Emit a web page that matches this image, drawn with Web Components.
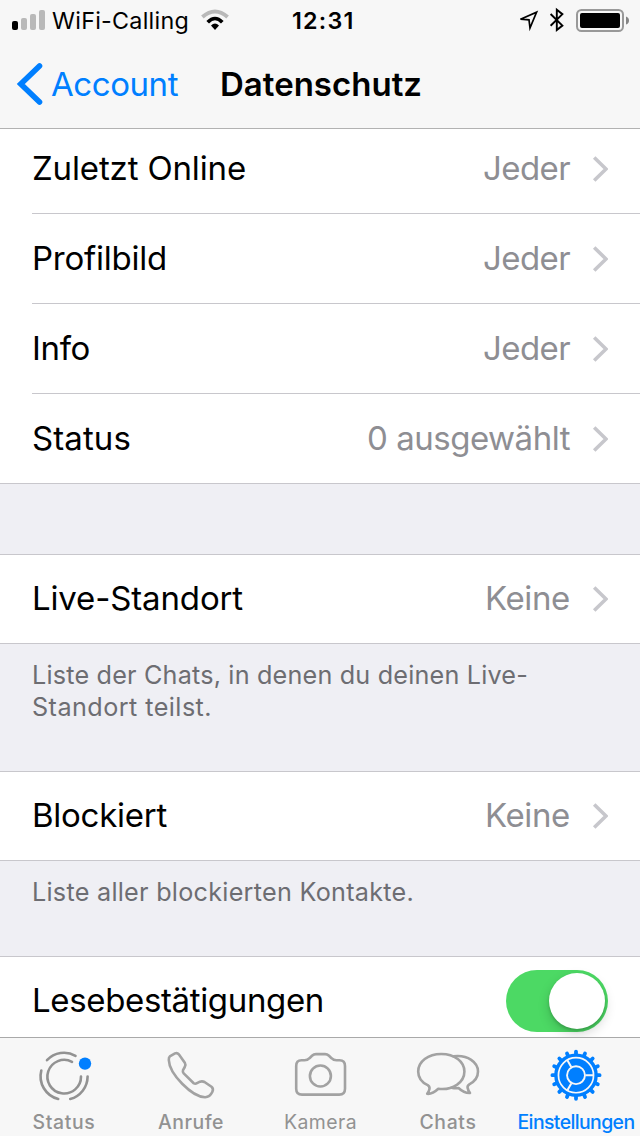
<!DOCTYPE html>
<html lang="de">
<head>
<meta charset="utf-8">
<title>Datenschutz</title>
<style>
html,body{margin:0;height:100%}
body{overflow:hidden;font-family:Inter,"Liberation Sans",sans-serif;background:#efeff4}
</style>
</head>
<body>
<privacy-screen></privacy-screen>
<script>
const define = (name, html, setup) => customElements.define(name, class extends HTMLElement {
  constructor() {
    super();
    const t = document.createElement('template');
    t.innerHTML = html;
    this.attachShadow({mode: 'open'}).append(t.content.cloneNode(true));
  }
  connectedCallback() { if (setup) setup(this, this.shadowRoot); }
});

// Text whose tracking is adjusted so that it fills the width given in "w".
define('fit-text', `<style>
:host{display:block;white-space:nowrap;flex:none}
</style><span><slot></slot></span>`, (el, root) => {
  const w = +el.getAttribute('w');
  const natural = root.querySelector('span').getBoundingClientRect().width;
  const n = el.textContent.length;
  el.style.letterSpacing = ((w - natural) / n) + 'px';
  el.style.width = w + 'px';
});

define('status-bar', `<style>
:host{display:grid;grid-template-columns:52px 147px 93px 224px 1fr;height:40px;align-items:center;color:#000;font-size:23.3px}
svg{display:block}
fit-text{line-height:38px;padding-top:2px}
.time{font-weight:600}
</style>
<svg width="51" height="40"><rect x="12" y="21" width="6" height="9" rx="2"/><g fill="#b9b9b9"><rect x="21" y="18" width="6" height="12" rx="2"/><rect x="30" y="14" width="6" height="16" rx="2"/><rect x="39" y="10" width="6" height="20" rx="2"/></g></svg>
<fit-text w="137">WiFi-Calling</fit-text>
<svg width="92" height="40" viewBox="199 0 92 40" fill="none"><path d="M202.4 17Q215 6 227.6 17" stroke="#b9b9b9" stroke-width="3.9"/><path d="M207.7 22.2Q215 14.8 222.3 22.2" stroke="#000" stroke-width="3.7"/><path d="M211 25.4Q215 21.6 219 25.4L215 30Z" fill="#000"/></svg>
<fit-text class="time" w="62.5">12:31</fit-text>
<svg width="124" height="40" viewBox="516 0 124 40"><path d="M520.5 19.2L536.6 12.2L530 28L529 19.8Z" fill="none" stroke="#000" stroke-width="1.7"/><path d="M550.6 14L562.4 25.6L556.8 30V9.8L562.4 14.2L550.6 25.8" fill="none" stroke="#000" stroke-width="1.9"/><rect x="577" y="10" width="46" height="21" rx="4.5" fill="none" stroke="#999" stroke-width="2"/><rect x="580" y="13" width="40" height="15" rx="2"/><path d="M626 16.5Q629 17.5 629 20.5T626 24.5Z" fill="#858585"/></svg>`);

define('nav-bar', `<style>
:host{display:block;height:128px;background:#f7f7f7;border-bottom:1px solid #b2b2b2;position:relative;z-index:1}
.bar{display:grid;grid-template-columns:51px 169px 1fr;height:88px;font-size:33px}
svg{display:block}
fit-text{line-height:88px}
.back{color:#007fff}
.title{font-weight:600}
</style>
<status-bar></status-bar>
<div class="bar">
<svg width="51" height="88" viewBox="0 40 51 88"><path d="M39.5 66L20.8 84L39.5 102" fill="none" stroke="#007fff" stroke-width="5.6" stroke-linecap="round"/></svg>
<fit-text class="back"></fit-text>
<fit-text class="title"></fit-text>
</div>`, (el, root) => {
  const put = (cls, text, w) => {
    const old = root.querySelector(cls), t = document.createElement('fit-text');
    t.className = cls.slice(1);
    t.setAttribute('w', w);
    t.textContent = text;
    old.replaceWith(t);
  };
  put('.back', el.getAttribute('back'), 127);
  put('.title', el.getAttribute('heading'), 202);
});

define('list-row', `<style>
:host{display:flex;box-sizing:border-box;height:90px;padding:0 32px;background:#fff;align-items:center;font-size:33px;line-height:87px;
background-image:linear-gradient(#c8c7cc,#c8c7cc);background-repeat:no-repeat;background-size:100% 1px;background-position:var(--inset,0) 89px}
:host([inset]){--inset:32px}
:host([first]){border-top:1px solid #c8c7cc;background-position:0 88px;padding-bottom:2px}
::slotted(fit-text){padding-bottom:2px}
:host([first]) ::slotted(fit-text){padding-bottom:0}
::slotted([slot=value]){margin-left:auto;color:#8e8e93}
svg{display:block;margin-left:22px}
</style>
<slot></slot><slot name="value"></slot><svg width="16" height="28"><path d="M2.2 2.5L14 14L2.2 25.5" fill="none" stroke="#c7c7cc" stroke-width="3.6"/></svg>`);

define('list-note', `<style>
:host{display:block;box-sizing:border-box;padding:15px 32px 0;font-size:25.2px;line-height:32px;color:#6d6d72}
</style><slot></slot>`);

define('toggle-row', `<style>
:host{display:flex;box-sizing:border-box;height:90px;border-top:1px solid #c8c7cc;padding:0 32px 2px;background:#fff;align-items:center;justify-content:space-between;font-size:33px;line-height:87px}
.track{width:102px;height:62px;border-radius:31px;background:#4cd964;display:flex;align-items:center;justify-content:flex-end;padding-right:3px;box-sizing:border-box}
.knob{width:56px;height:56px;border-radius:50%;background:#fff;box-shadow:0 5px 12px rgba(0,0,0,.17),0 2px 3px rgba(0,0,0,.16)}
</style><slot></slot><div class="track"><div class="knob"></div></div>`);

define('tab-item', `<style>
:host{display:flex;flex-direction:column;align-items:center;color:#929292;font-size:19.4px;line-height:24px;font-weight:500}
:host([active]){color:#007fff}
::slotted(svg){display:block;width:128px;height:72px;fill:none;stroke:currentColor;stroke-width:2.6;stroke-linecap:round;stroke-linejoin:round}
</style><slot name="icon"></slot><slot></slot>`);

define('tab-bar', `<style>
:host{display:grid;grid-template-columns:repeat(5,128px);height:98px;background:#f7f7f7;border-top:1px solid #a9a9a9;position:relative;z-index:1}
</style>
<tab-item><svg slot="icon" viewBox="0 1038 128 72"><path d="M47 1060.2A23.4 23.4 0 0 1 75.5 1055.8M41.3 1070.5A23.4 23.4 0 0 0 58.2 1099M70.2 1099A23.4 23.4 0 0 0 87.6 1076.5M72 1061.8A16.8 16.8 0 1 0 81 1076.5"/><circle cx="85" cy="1063.6" r="6.2" fill="#007fff" stroke="none"/></svg><fit-text w="63">Status</fit-text></tab-item>
<tab-item><svg slot="icon" viewBox="128 1038 128 72"><path style="stroke:#a2a2a2" d="M169.8 1056.4L175 1053.4Q177.2 1052.4 178.8 1054.3L184.8 1062.7Q186 1064.7 184.8 1067L183 1070.2Q182.4 1071.8 183.7 1073.4L193.7 1083.2Q195.2 1084.3 197 1083.2L200 1081.7Q202.3 1080.9 204.5 1082L211.5 1086.8Q213.8 1088.7 212.4 1091.8Q209.8 1097.3 205 1097.2C192 1097 169.3 1074 168.8 1060Q168.7 1057.3 169.8 1056.4Z"/></svg><fit-text w="66" style="margin-right:2px">Anrufe</fit-text></tab-item>
<tab-item><svg slot="icon" viewBox="256 1038 128 72"><g style="stroke:#a2a2a2"><path d="M301.5 1060.3H304.5Q307.5 1060.3 309.5 1058.2L312 1055.8Q313.8 1054.1 316 1054.1H325Q327.2 1054.1 329 1055.8L331.5 1058.2Q333.5 1060.3 336.5 1060.3H339.5Q345 1060.3 345 1066V1088.7Q345 1094.6 339.2 1094.6H302Q296.2 1094.6 296.2 1088.7V1066Q296.2 1060.3 301.5 1060.3Z"/><circle cx="320.4" cy="1076" r="10.5"/></g></svg><fit-text w="73" style="font-weight:400;margin-left:1px">Kamera</fit-text></tab-item>
<tab-item><svg slot="icon" viewBox="384 1038 128 72"><g style="stroke:#a2a2a2"><path d="M441.3 1054C428 1054 418.2 1061.5 418.2 1071.5C418.2 1077.5 421.8 1082.4 427.7 1085.2C430.7 1087 429.6 1090.5 427.2 1093.8C432 1094.2 436 1091 438.3 1088.8C453 1090.5 464.4 1082.3 464.4 1071.5C464.4 1061.5 454.5 1054 441.3 1054Z"/><path d="M453.5 1056.3C468 1054.5 478 1062.5 478 1071.5C478 1078 473.8 1082 469.3 1084.3C466.5 1086 467.3 1089 470 1093C465 1093.3 461.5 1090.8 458.5 1088Q455.5 1088.5 451.5 1087.7"/></g></svg><fit-text w="57">Chats</fit-text></tab-item>
<tab-item active><svg slot="icon" viewBox="512 1038 128 72"><g transform="translate(576 1075.2)"><circle r="20.1" stroke-width="3.4"/><circle class="teeth" r="0"/><circle r="13.3" stroke-width="6.8"/><circle r="8" fill="currentColor" stroke="none"/><g stroke="#f7f7f7" stroke-width="2" stroke-linecap="butt"><path d="M9.5 0H17.5M-4.75 8.2L-8.75 15.2M-4.75 -8.2L-8.75 -15.2"/></g></g></svg><fit-text w="117">Einstellungen</fit-text></tab-item>`, (el, root) => {
  // Sixteen short spokes form the teeth of the gear.
  let d = '';
  for (let i = 0; i < 16; i++) {
    const a = i * Math.PI / 8, c = Math.cos(a), s = Math.sin(a);
    d += `M${21 * c} ${21 * s}L${23.6 * c} ${23.6 * s}`;
  }
  const path = document.createElementNS('http://www.w3.org/2000/svg', 'path');
  path.setAttribute('d', d);
  path.setAttribute('stroke-width', '3.8');
  root.querySelector('.teeth').replaceWith(path);
});

define('privacy-screen', `<style>
:host{display:flex;flex-direction:column;width:640px;height:1136px;overflow:hidden;background:#efeff4;color:#000}
main{flex:1;min-height:0;overflow:hidden}
.list{margin-top:-5px}
.gap{height:70px}
.n1{height:127px}.n2{height:95px}
</style>
<nav-bar back="Account" heading="Datenschutz"></nav-bar>
<main><div class="list">
<list-row inset><fit-text w="214">Zuletzt Online</fit-text><fit-text slot="value" w="87">Jeder</fit-text></list-row>
<list-row inset><fit-text w="135">Profilbild</fit-text><fit-text slot="value" w="87">Jeder</fit-text></list-row>
<list-row inset><fit-text w="58">Info</fit-text><fit-text slot="value" w="87">Jeder</fit-text></list-row>
<list-row><fit-text w="99">Status</fit-text><fit-text slot="value" w="203">0 ausgewählt</fit-text></list-row>
<div class="gap"></div>
<list-row first><fit-text w="211">Live-Standort</fit-text><fit-text slot="value" w="85">Keine</fit-text></list-row>
<list-note class="n1"><fit-text w="496">Liste der Chats, in denen du deinen Live-</fit-text><fit-text w="180">Standort teilst.</fit-text></list-note>
<list-row first><fit-text w="135">Blockiert</fit-text><fit-text slot="value" w="85">Keine</fit-text></list-row>
<list-note class="n2"><fit-text w="382">Liste aller blockierten Kontakte.</fit-text></list-note>
<toggle-row><fit-text w="292">Lesebestätigungen</fit-text></toggle-row>
</div></main>
<tab-bar></tab-bar>`);
</script>
</body>
</html>
